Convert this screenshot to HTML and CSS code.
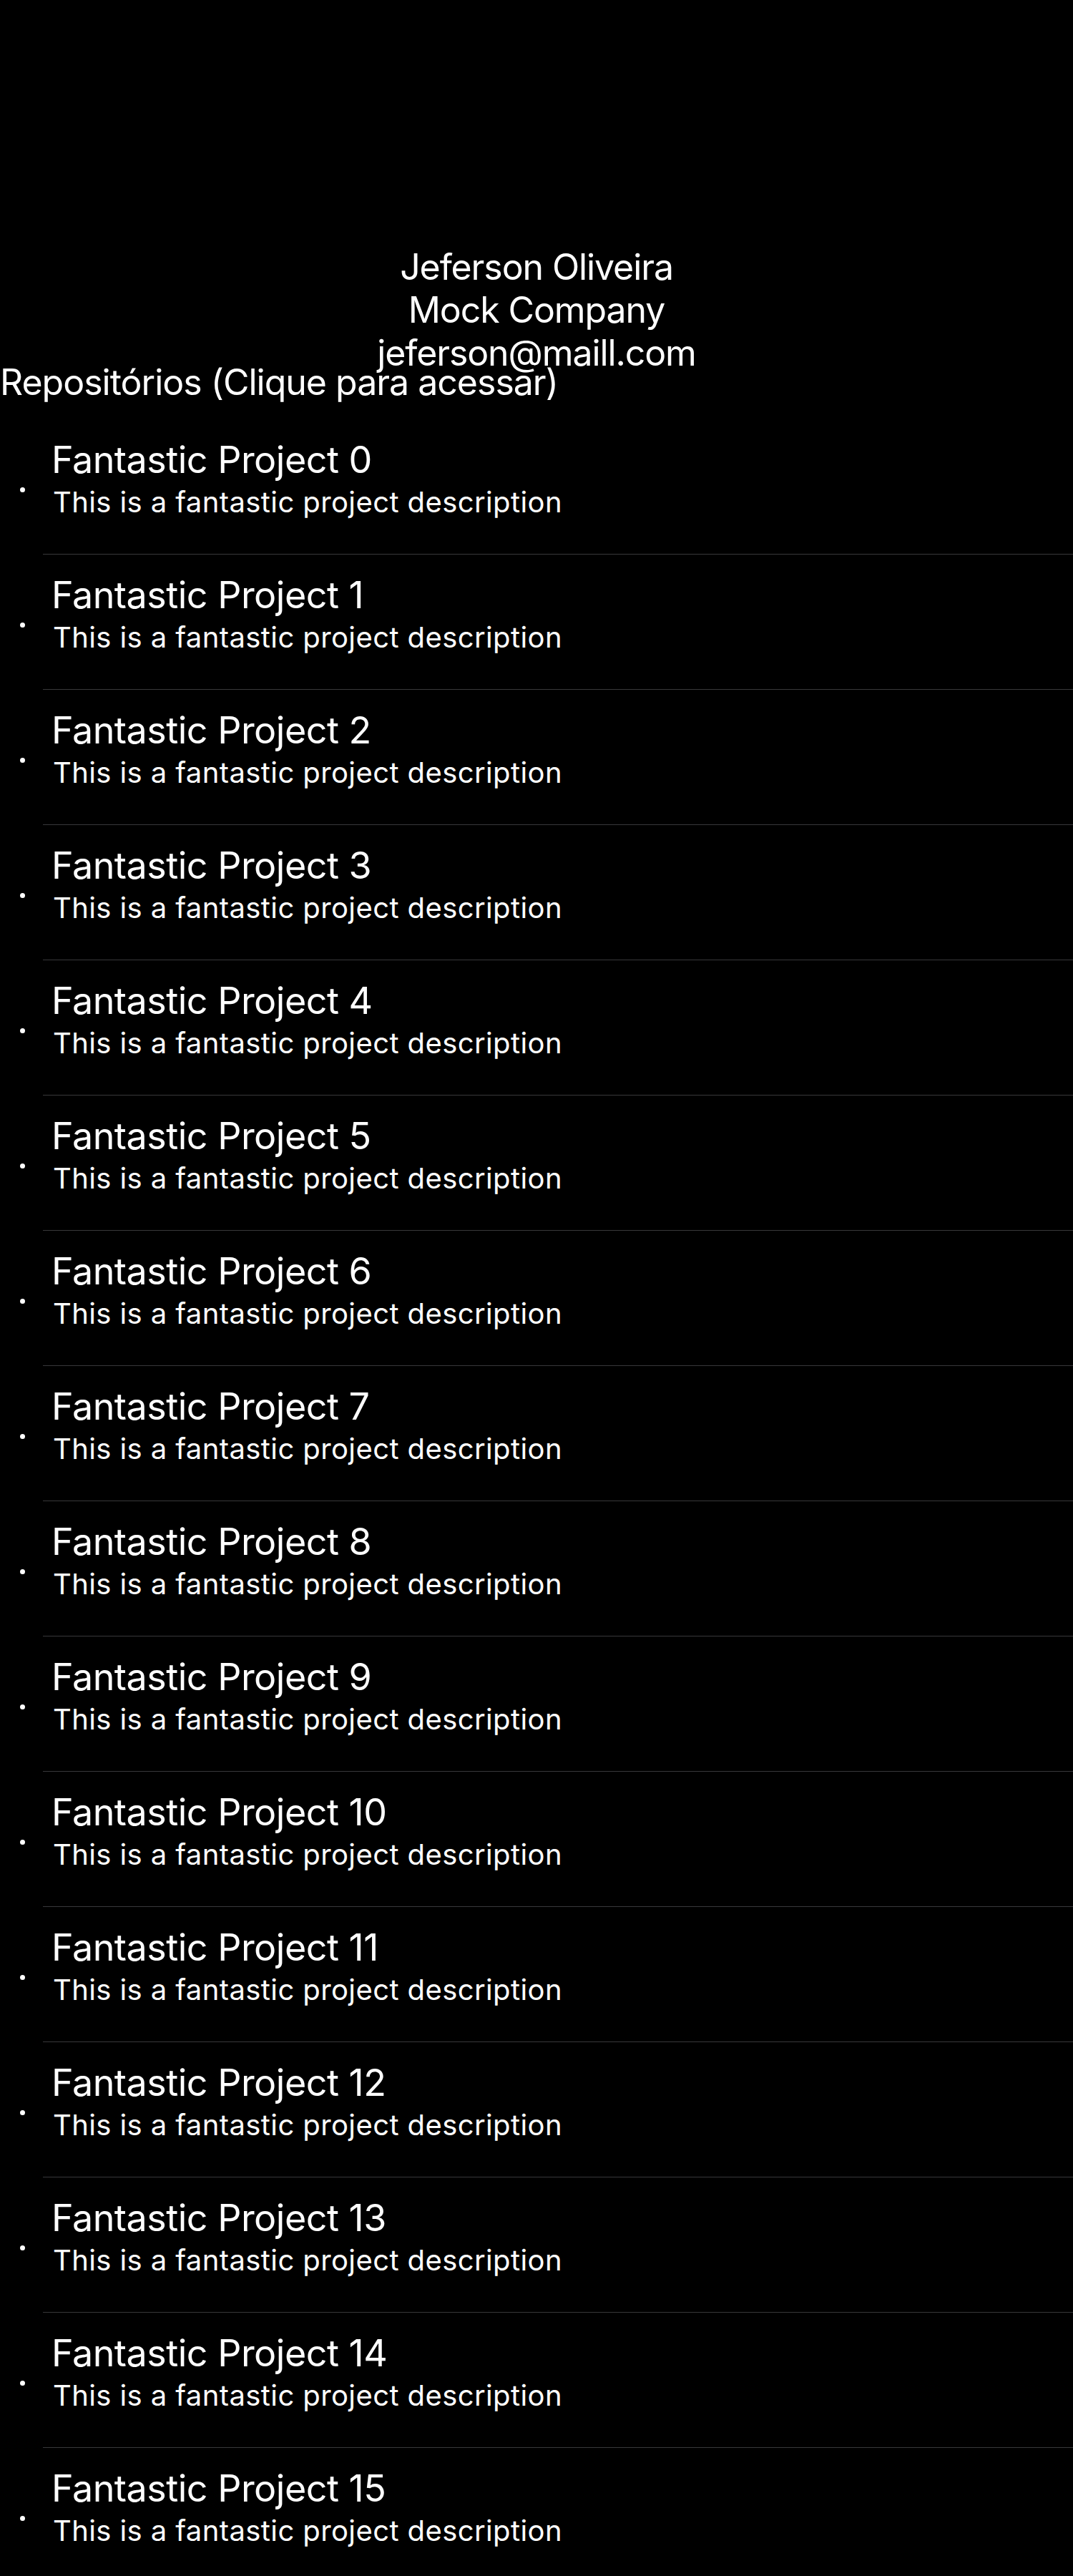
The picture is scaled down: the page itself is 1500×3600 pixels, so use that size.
FILE: index.html
```html
<!DOCTYPE html>
<html lang="pt-BR">
<head>
<meta charset="utf-8">
<title>Perfil</title>
<link rel="stylesheet" href="styles.css">
</head>
<body>
<header class="profile">
  <div class="profile-line">Jeferson Oliveira</div>
  <div class="profile-line">Mock Company</div>
  <div class="profile-line">jeferson@maill.com</div>
</header>
<h2 class="section-title">Repositórios (Clique para acessar)</h2>
<ul class="repo-list">
  <li class="repo"><span class="repo-bullet"></span><div class="repo-body"><div class="repo-name">Fantastic Project 0</div><div class="repo-desc">This is a fantastic project description</div></div></li>
  <li class="repo"><span class="repo-bullet"></span><div class="repo-body"><div class="repo-name">Fantastic Project 1</div><div class="repo-desc">This is a fantastic project description</div></div></li>
  <li class="repo"><span class="repo-bullet"></span><div class="repo-body"><div class="repo-name">Fantastic Project 2</div><div class="repo-desc">This is a fantastic project description</div></div></li>
  <li class="repo"><span class="repo-bullet"></span><div class="repo-body"><div class="repo-name">Fantastic Project 3</div><div class="repo-desc">This is a fantastic project description</div></div></li>
  <li class="repo"><span class="repo-bullet"></span><div class="repo-body"><div class="repo-name">Fantastic Project 4</div><div class="repo-desc">This is a fantastic project description</div></div></li>
  <li class="repo"><span class="repo-bullet"></span><div class="repo-body"><div class="repo-name">Fantastic Project 5</div><div class="repo-desc">This is a fantastic project description</div></div></li>
  <li class="repo"><span class="repo-bullet"></span><div class="repo-body"><div class="repo-name">Fantastic Project 6</div><div class="repo-desc">This is a fantastic project description</div></div></li>
  <li class="repo"><span class="repo-bullet"></span><div class="repo-body"><div class="repo-name">Fantastic Project 7</div><div class="repo-desc">This is a fantastic project description</div></div></li>
  <li class="repo"><span class="repo-bullet"></span><div class="repo-body"><div class="repo-name">Fantastic Project 8</div><div class="repo-desc">This is a fantastic project description</div></div></li>
  <li class="repo"><span class="repo-bullet"></span><div class="repo-body"><div class="repo-name">Fantastic Project 9</div><div class="repo-desc">This is a fantastic project description</div></div></li>
  <li class="repo"><span class="repo-bullet"></span><div class="repo-body"><div class="repo-name">Fantastic Project 10</div><div class="repo-desc">This is a fantastic project description</div></div></li>
  <li class="repo"><span class="repo-bullet"></span><div class="repo-body"><div class="repo-name">Fantastic Project 11</div><div class="repo-desc">This is a fantastic project description</div></div></li>
  <li class="repo"><span class="repo-bullet"></span><div class="repo-body"><div class="repo-name">Fantastic Project 12</div><div class="repo-desc">This is a fantastic project description</div></div></li>
  <li class="repo"><span class="repo-bullet"></span><div class="repo-body"><div class="repo-name">Fantastic Project 13</div><div class="repo-desc">This is a fantastic project description</div></div></li>
  <li class="repo"><span class="repo-bullet"></span><div class="repo-body"><div class="repo-name">Fantastic Project 14</div><div class="repo-desc">This is a fantastic project description</div></div></li>
  <li class="repo"><span class="repo-bullet"></span><div class="repo-body"><div class="repo-name">Fantastic Project 15</div><div class="repo-desc">This is a fantastic project description</div></div></li>
</ul>
</body>
</html>
```

FILE: styles.css
```css
html, body {
  margin: 0;
  padding: 0;
  background: #000;
}

body {
  color: #fff;
  font-family: Inter, "Liberation Sans", sans-serif;
}

.profile {
  padding-top: 343px;
  display: flex;
  flex-direction: column;
  align-items: center;
}

.profile-line {
  font-size: 50px;
  line-height: 60px;
  letter-spacing: -0.022em;
  white-space: nowrap;
}

.section-title {
  margin: -19px 0 0 0;
  font-size: 50px;
  line-height: 60px;
  font-weight: 400;
  letter-spacing: -0.02em;
  white-space: nowrap;
}

.repo-list {
  list-style: none;
  margin: 22px 0 0 0;
  padding: 0;
}

.repo {
  display: flex;
  align-items: stretch;
}

.repo-bullet {
  flex: 0 0 60px;
  display: flex;
  align-items: center;
  padding-top: 7px;
  box-sizing: border-box;
}

.repo-bullet::before {
  content: "";
  width: 7px;
  height: 7px;
  margin-left: 28px;
  border-radius: 50%;
  background: #fff;
}

.repo-body {
  flex: 1;
  padding: 25px 0 46px 12px;
  border-bottom: 1px solid #38383a;
}

.repo-name {
  font-size: 52px;
  line-height: 64px;
  letter-spacing: -0.5px;
  white-space: nowrap;
}

.repo-desc {
  font-size: 40px;
  line-height: 53px;
  letter-spacing: 0.4px;
  padding-left: 2px;
  white-space: nowrap;
}
```
